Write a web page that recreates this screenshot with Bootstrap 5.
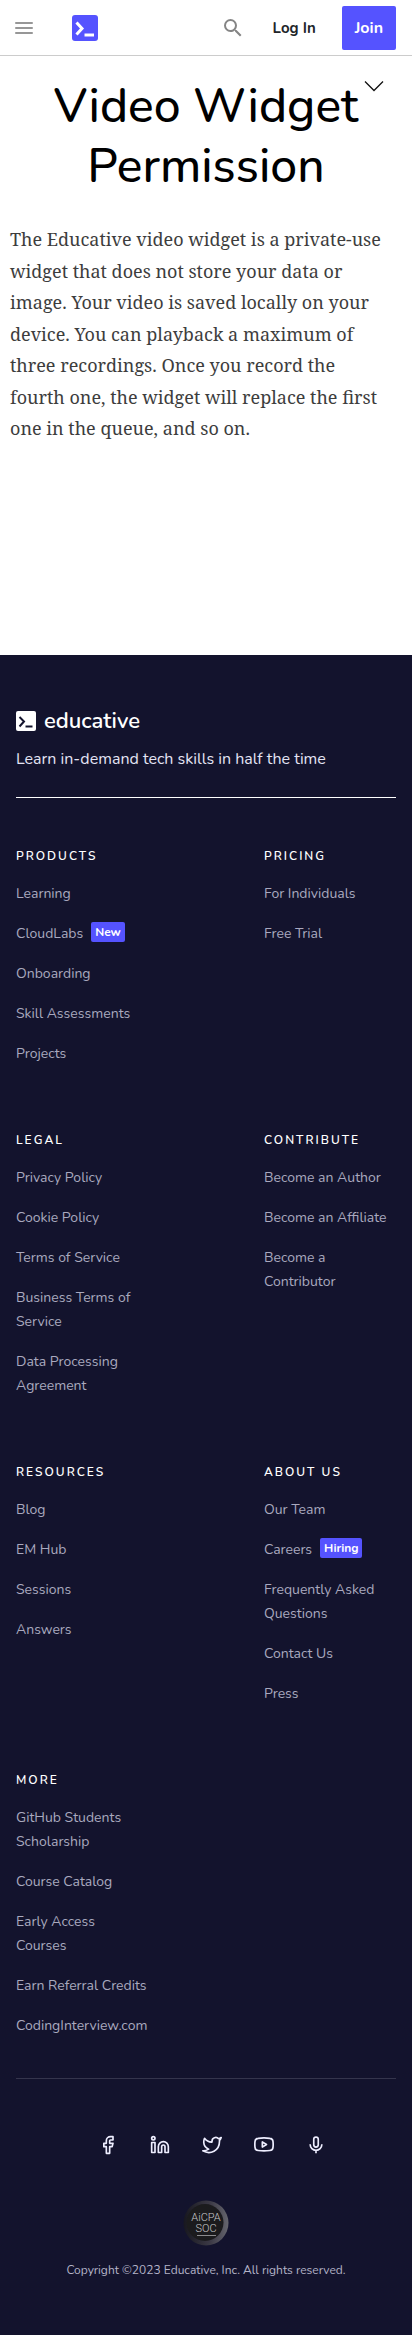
<!DOCTYPE html>
<html lang="en">
<head>
<meta charset="utf-8">
<meta name="viewport" content="width=device-width, initial-scale=1">
<title>Video Widget Permission</title>
<link href="https://cdn.jsdelivr.net/npm/bootstrap@5.3.0/dist/css/bootstrap.min.css" rel="stylesheet">
<style>
  body { font-family: Nunito, "Nunito Sans", Lato, sans-serif; color: #000; background: #fff; }
  .site-header { min-height: 56px; padding: 0 16px 0 15px; border-bottom: 1px solid #ccc; }
  .menu-btn { color: #757575; margin-right: 39px; }
  .search-btn { color: #858585; }
  .login-link { font-size: 15px; line-height: 24px; font-weight: 700; color: #212529; margin: 0 26px 0 28px; }
  .join-btn { height: 44px; padding: 0 13px; font-size: 16px; font-weight: 700; color: #fff; background: #5553ff; border: 0; border-radius: 2px; }
  .page-title { font-size: 48px; line-height: 60px; font-weight: 500; padding: 20px 16px 0; margin-bottom: 28px; }
  .expand-btn { top: 20px; right: 28px; color: #111; }
  .article-body { min-height: 431px; padding: 0 20px 0 10px; }
  .article-text { font-family: "Noto Serif", "Droid Serif", "DejaVu Serif", serif; font-size: 18px; line-height: 1.75; color: #3d3d3d; }
  .site-footer { background: #13132d; color: #c5c5d6; padding: 56px 16px 55px; }
  .wordmark { font-size: 22px; line-height: 20px; font-weight: 600; color: #fff; }
  .tagline { font-size: 16px; line-height: 24px; color: #e4e4f4; }
  .rule-bright { height: 1px; background: #fff; margin: 26px 0 48px; }
  .rule-dim { height: 1px; background: #35354c; margin: 40px 0 56px; }
  .footer-groups { row-gap: 64px; }
  .footer-group { flex: 0 0 132px; }
  .footer-group h2 { font-size: 12px; line-height: 20px; font-weight: 600; letter-spacing: 2px; color: #fff; }
  .footer-group a { font-size: 14px; line-height: 24px; color: #a9a9bf; text-decoration: none; }
  .tag { font-size: 12px; line-height: 20px; height: 20px; padding: 0 4px; border-radius: 2px; font-weight: 700; color: #fff; background: #5553ff; }
  .social { gap: 32px; padding-left: 12px; margin-bottom: 45px; }
  .social a { color: #eeeeff; }
  .copyright { font-size: 12px; line-height: 20px; color: #b4b4c8; margin: 14px 0 0; }
</style>
</head>
<body>
<header class="site-header d-flex align-items-center">
  <button class="menu-btn btn p-0 border-0 d-flex" type="button" aria-label="Menu">
    <svg width="18" height="14" viewBox="0 0 18 14" stroke="currentColor" stroke-width="1.600" stroke-linecap="round"><path d="M.8 2h16.400M.8 7h16.400M.8 12h16.400"/></svg>
  </button>
  <a class="d-flex me-auto" href="#" aria-label="Home">
    <svg width="26" height="26" viewBox="0 0 26 26" fill="none" stroke="#fff"><rect width="26" height="26" rx="3" fill="#5553ff" stroke="none"/><path d="M4.500 7.500l5.500 6-5.500 6" stroke-width="3"/><path d="M12.500 20h9.500" stroke-width="3"/></svg>
  </a>
  <button class="search-btn btn p-0 border-0 d-flex" type="button" aria-label="Search">
    <svg width="24" height="24" viewBox="0 0 24 24" fill="currentColor"><path d="M15.500 14h-.79l-.28-.27A6.471 6.471 0 0 0 16 9.500 6.500 6.500 0 1 0 9.500 16c1.610 0 3.090-.59 4.230-1.570l.27.28v.79l5 4.990L20.490 19l-4.990-5zm-6 0C7.010 14 5 11.990 5 9.500S7.010 5 9.500 5 14 7.010 14 9.500 11.990 14 9.500 14z"/></svg>
  </button>
  <a class="login-link text-decoration-none" href="#">Log In</a>
  <button class="join-btn" type="button">Join</button>
</header>

<main class="position-relative">
  <h1 class="page-title text-center">Video Widget Permission</h1>
  <button class="expand-btn btn p-0 border-0 d-flex position-absolute" type="button" aria-label="Expand">
    <svg width="20" height="20" viewBox="0 0 20 20" fill="none" stroke="currentColor" stroke-width="1.300"><path d="M1 5.500l9 9 9-9"/></svg>
  </button>
  <div class="article-body">
    <p class="article-text mb-0">The Educative video widget is a private-use widget that does not store your data or image. Your video is saved locally on your device. You can playback a maximum of three recordings. Once you record the fourth one, the widget will replace the first one in the queue, and so on.</p>
  </div>
</main>

<footer class="site-footer">
  <a class="d-flex align-items-center gap-2 text-decoration-none" href="#">
    <svg width="20" height="20" viewBox="0 0 20 20" fill="none" stroke="#13132d"><rect width="20" height="20" rx="2" fill="#fff" stroke="none"/><path d="M3.500 6l4.500 4.500L3.500 15.500" stroke-width="2"/><path d="M9.500 15.500h7" stroke-width="2"/></svg>
    <span class="wordmark">educative</span>
  </a>
  <p class="tagline mt-3 mb-0">Learn in-demand tech skills in half the time</p>
  <div class="rule-bright"></div>

  <nav class="footer-groups d-flex flex-wrap justify-content-between" aria-label="Footer">
    <section class="footer-group">
      <h2 class="mb-3">PRODUCTS</h2>
      <ul class="list-unstyled d-grid gap-3 mb-0">
        <li class="d-flex"><a href="#">Learning</a></li>
        <li class="d-flex gap-2"><a href="#">CloudLabs</a><span class="tag">New</span></li>
        <li class="d-flex"><a href="#">Onboarding</a></li>
        <li class="d-flex"><a href="#">Skill Assessments</a></li>
        <li class="d-flex"><a href="#">Projects</a></li>
      </ul>
    </section>
    <section class="footer-group">
      <h2 class="mb-3">PRICING</h2>
      <ul class="list-unstyled d-grid gap-3 mb-0">
        <li class="d-flex"><a href="#">For Individuals</a></li>
        <li class="d-flex"><a href="#">Free Trial</a></li>
      </ul>
    </section>
    <section class="footer-group">
      <h2 class="mb-3">LEGAL</h2>
      <ul class="list-unstyled d-grid gap-3 mb-0">
        <li class="d-flex"><a href="#">Privacy Policy</a></li>
        <li class="d-flex"><a href="#">Cookie Policy</a></li>
        <li class="d-flex"><a href="#">Terms of Service</a></li>
        <li class="d-flex"><a href="#">Business Terms of Service</a></li>
        <li class="d-flex"><a href="#">Data Processing Agreement</a></li>
      </ul>
    </section>
    <section class="footer-group">
      <h2 class="mb-3">CONTRIBUTE</h2>
      <ul class="list-unstyled d-grid gap-3 mb-0">
        <li class="d-flex"><a href="#">Become an Author</a></li>
        <li class="d-flex"><a href="#">Become an Affiliate</a></li>
        <li class="d-flex"><a href="#">Become a<br>Contributor</a></li>
      </ul>
    </section>
    <section class="footer-group">
      <h2 class="mb-3">RESOURCES</h2>
      <ul class="list-unstyled d-grid gap-3 mb-0">
        <li class="d-flex"><a href="#">Blog</a></li>
        <li class="d-flex"><a href="#">EM Hub</a></li>
        <li class="d-flex"><a href="#">Sessions</a></li>
        <li class="d-flex"><a href="#">Answers</a></li>
      </ul>
    </section>
    <section class="footer-group">
      <h2 class="mb-3">ABOUT US</h2>
      <ul class="list-unstyled d-grid gap-3 mb-0">
        <li class="d-flex"><a href="#">Our Team</a></li>
        <li class="d-flex gap-2"><a href="#">Careers</a><span class="tag">Hiring</span></li>
        <li class="d-flex"><a href="#">Frequently Asked Questions</a></li>
        <li class="d-flex"><a href="#">Contact Us</a></li>
        <li class="d-flex"><a href="#">Press</a></li>
      </ul>
    </section>
    <section class="footer-group">
      <h2 class="mb-3">MORE</h2>
      <ul class="list-unstyled d-grid gap-3 mb-0">
        <li class="d-flex"><a href="#">GitHub Students Scholarship</a></li>
        <li class="d-flex"><a href="#">Course Catalog</a></li>
        <li class="d-flex"><a href="#">Early Access<br>Courses</a></li>
        <li class="d-flex"><a href="#">Earn Referral Credits</a></li>
        <li class="d-flex"><a href="#">CodingInterview.com</a></li>
      </ul>
    </section>
  </nav>

  <div class="rule-dim"></div>

  <div class="social d-flex justify-content-center">
    <a class="d-flex" href="#" aria-label="Facebook"><svg width="20" height="20" viewBox="0 0 24 24" fill="none" stroke="currentColor" stroke-width="2" stroke-linejoin="round"><path d="M18 2h-3a5 5 0 0 0-5 5v3H7v4h3v8h4v-8h3l1-4h-4V7a1 1 0 0 1 1-1h3z"/></svg></a>
    <a class="d-flex" href="#" aria-label="LinkedIn"><svg width="20" height="20" viewBox="0 0 24 24" fill="none" stroke="currentColor" stroke-width="2" stroke-linejoin="round"><path d="M16 8a6 6 0 0 1 6 6v7h-4v-7a2 2 0 0 0-4 0v7h-4v-7a6 6 0 0 1 6-6z"/><path d="M2 9h4v12H2z"/><circle cx="4" cy="4" r="2"/></svg></a>
    <a class="d-flex" href="#" aria-label="Twitter"><svg width="20" height="20" viewBox="0 0 24 24" fill="none" stroke="currentColor" stroke-width="2" stroke-linejoin="round"><path d="M23 3a10.900 10.900 0 0 1-3.140 1.530 4.480 4.480 0 0 0-7.860 3v1A10.660 10.660 0 0 1 3 4s-4 9 5 13a11.640 11.640 0 0 1-7 2c9 5 20 0 20-11.500a4.500 4.500 0 0 0-.08-.83A7.720 7.720 0 0 0 23 3z"/></svg></a>
    <a class="d-flex" href="#" aria-label="YouTube"><svg width="20" height="20" viewBox="0 0 24 24" fill="none" stroke="currentColor" stroke-width="2" stroke-linejoin="round"><path d="M5 4q7-1 14 0 3.600.3 3.800 3.800.4 3.500 0 7-.2 3.500-3.800 3.800-7 1-14 0-3.600-.3-3.800-3.800-.4-3.500 0-7Q1.400 4.300 5 4z"/><path d="M10 8.300v6.200l5-3.100z"/></svg></a>
    <a class="d-flex" href="#" aria-label="Podcast"><svg width="20" height="20" viewBox="0 0 24 24" fill="none" stroke="currentColor" stroke-width="2"><rect x="9.300" y="2.500" width="5.400" height="12" rx="2.700"/><path d="M5 11v.5a7 7 0 0 0 14 0V11M12 18.500V22"/></svg></a>
  </div>

  <div class="d-flex justify-content-center">
    <svg width="46" height="46" viewBox="0 0 46 46" role="img" aria-label="AICPA SOC">
      <defs><linearGradient id="ring" x1="0" y1="0" x2="1" y2="0"><stop offset="0" stop-color="#17171f"/><stop offset=".6" stop-color="#3c3a46"/><stop offset="1" stop-color="#66666e"/></linearGradient></defs>
      <circle cx="23" cy="23" r="22.500" fill="url(#ring)"/>
      <circle cx="22" cy="22.500" r="18.500" fill="#1b1b1d"/>
      <g fill="#c8c8ca" font-family="Roboto, sans-serif" font-weight="300" font-size="11" text-anchor="middle"><text x="23" y="21">AiCPA</text><text x="23" y="32">SOC</text></g>
      <path d="M14 35.500h19" stroke="#8a8a8c"/>
    </svg>
  </div>
  <p class="copyright text-center">Copyright ©2023 Educative, Inc. All rights reserved.</p>
</footer>
<script src="https://cdn.jsdelivr.net/npm/bootstrap@5.3.0/dist/js/bootstrap.bundle.min.js"></script>
</body>
</html>
